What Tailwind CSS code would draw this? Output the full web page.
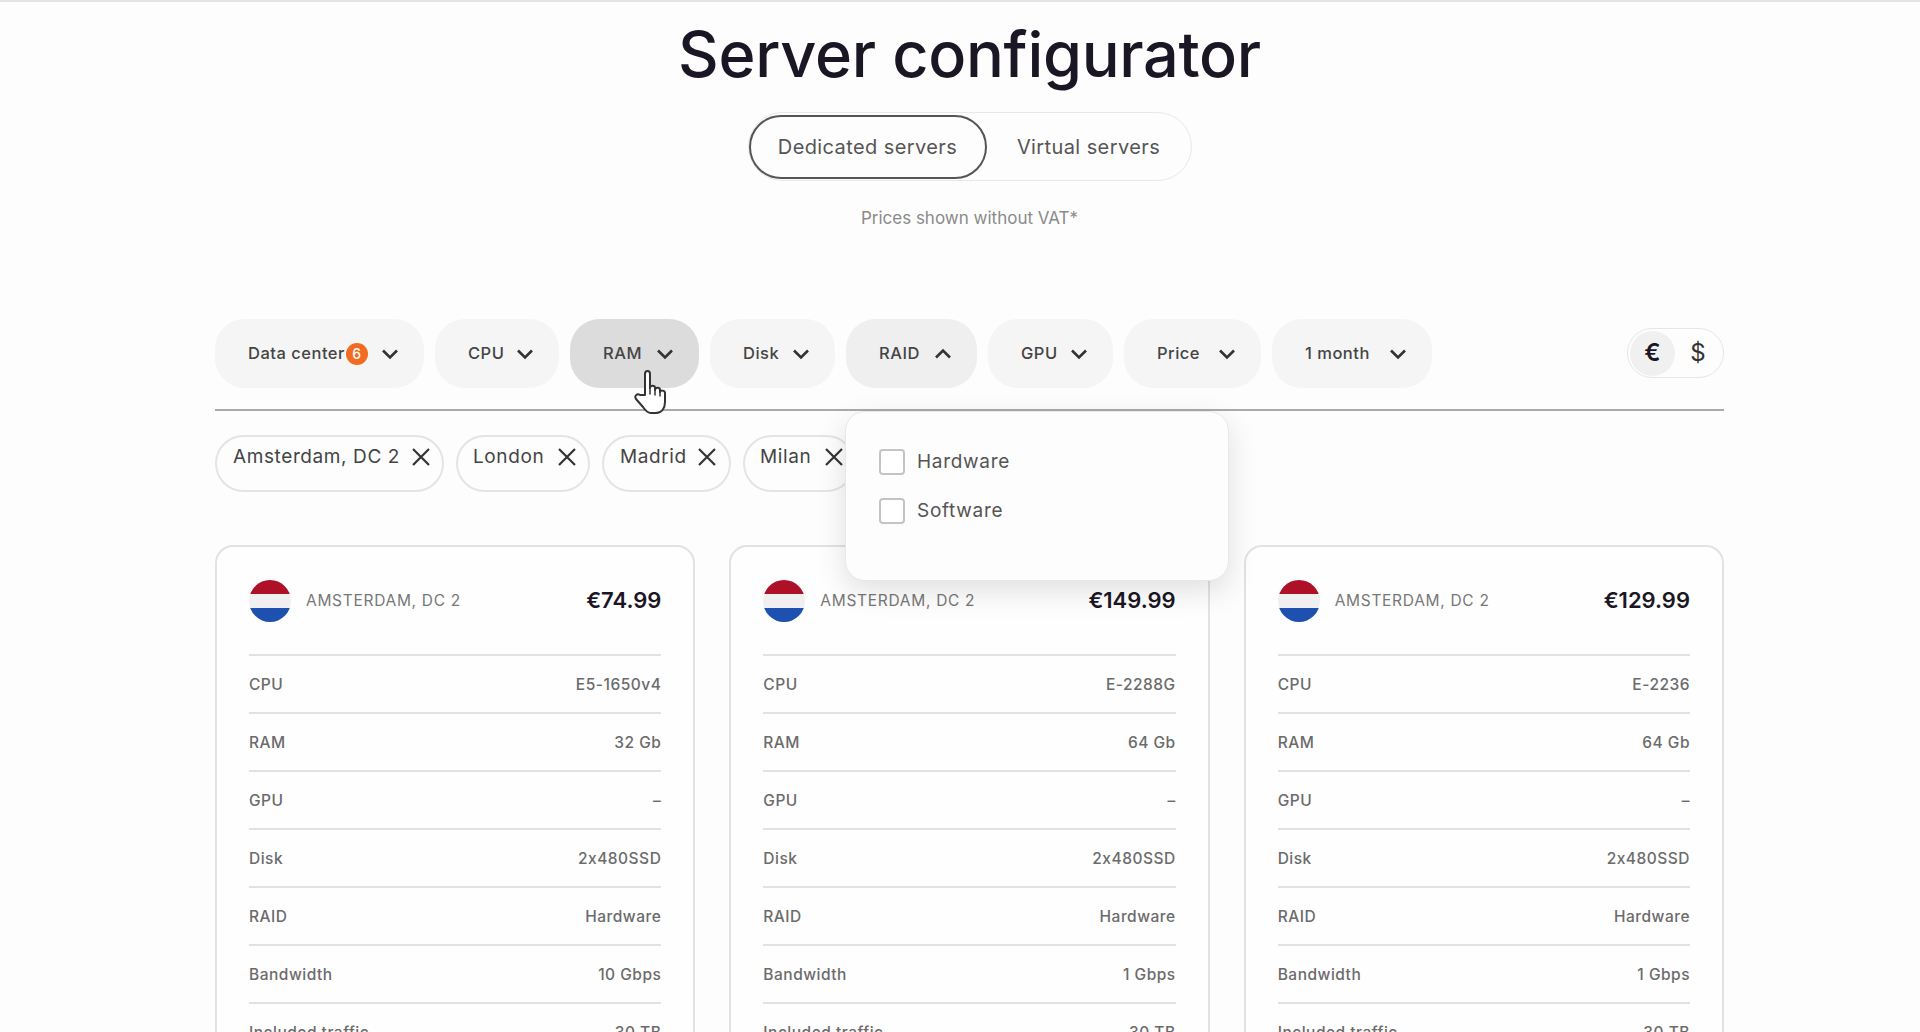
<!DOCTYPE html>
<html>
<head>
  <meta charset="UTF-8">
  <title>Server configurator</title>
  <script src="https://cdn.jsdelivr.net/npm/@tailwindcss/browser@4"></script>
</head>
<body class="h-screen overflow-hidden bg-[#fdfdfd] border-t-2 border-[#e4e4e4] font-['Inter','Noto_Sans',sans-serif] [font-feature-settings:'calt'_0] text-[#1b1623]">

<div class="relative ml-[215px] w-[1509px]">

  <!-- Header -->
  <h1 class="h-[110px] pb-[5px] flex items-center justify-center text-[63px] font-medium tracking-[-0.3px] leading-none">Server configurator</h1>

  <div class="flex justify-center">
    <div class="flex w-[444px] h-[69px] items-center rounded-full border border-[#e8e8e8]">
      <button class="w-[238px] h-[64px] rounded-full border-2 border-[#555] text-[20px] text-[#555] tracking-[0.4px]">Dedicated servers</button>
      <button class="flex-1 text-[20px] text-[#555] tracking-[0.4px]">Virtual servers</button>
    </div>
  </div>

  <p class="mt-[26px] h-[22px] text-center text-[17px] leading-[22px] text-[#8a8a8a]">Prices shown without VAT*</p>

  <!-- Filters -->
  <div class="mt-[90px] h-[92px] flex items-start border-b-2 border-[#aaaaaa]">
    <div class="flex gap-[11px]">
      <button class="flex items-center w-[209px] h-[69px] pl-[33px] rounded-[30px] bg-[#f5f5f5] text-[16.5px] tracking-[0.5px] font-medium text-[#444]">
        <span>Data center</span>
        <span class="ml-[1px] flex items-center justify-center w-[22px] h-[22px] rounded-full bg-[#f26b21] text-[14px] text-white">6</span>
        <svg class="ml-[13px]" width="18" height="18" viewBox="0 0 18 18" fill="none" stroke="#333" stroke-width="2.6"><path d="M2 5.5l7 7 7-7"/></svg>
      </button>
      <button class="flex items-center justify-between w-[124px] h-[69px] pl-[33px] pr-[25px] rounded-[30px] bg-[#f5f5f5] text-[16.5px] tracking-[0.5px] font-medium text-[#444]">
        <span>CPU</span>
        <svg width="18" height="18" viewBox="0 0 18 18" fill="none" stroke="#333" stroke-width="2.6"><path d="M2 5.5l7 7 7-7"/></svg>
      </button>
      <button class="flex items-center justify-between w-[129px] h-[69px] pl-[33px] pr-[25px] rounded-[30px] bg-[#dcdcdc] text-[16.5px] tracking-[0.5px] font-medium text-[#444]">
        <span>RAM</span>
        <svg width="18" height="18" viewBox="0 0 18 18" fill="none" stroke="#333" stroke-width="2.6"><path d="M2 5.5l7 7 7-7"/></svg>
      </button>
      <button class="flex items-center justify-between w-[125px] h-[69px] pl-[33px] pr-[25px] rounded-[30px] bg-[#f5f5f5] text-[16.5px] tracking-[0.5px] font-medium text-[#444]">
        <span>Disk</span>
        <svg width="18" height="18" viewBox="0 0 18 18" fill="none" stroke="#333" stroke-width="2.6"><path d="M2 5.5l7 7 7-7"/></svg>
      </button>
      <button class="flex items-center justify-between w-[131px] h-[69px] pl-[33px] pr-[25px] rounded-[30px] bg-[#efefef] text-[16.5px] tracking-[0.5px] font-medium text-[#444]">
        <span>RAID</span>
        <svg width="18" height="18" viewBox="0 0 18 18" fill="none" stroke="#333" stroke-width="2.6"><path d="M2 12.5l7-7 7 7"/></svg>
      </button>
      <button class="flex items-center justify-between w-[125px] h-[69px] pl-[33px] pr-[25px] rounded-[30px] bg-[#f5f5f5] text-[16.5px] tracking-[0.5px] font-medium text-[#444]">
        <span>GPU</span>
        <svg width="18" height="18" viewBox="0 0 18 18" fill="none" stroke="#333" stroke-width="2.6"><path d="M2 5.5l7 7 7-7"/></svg>
      </button>
      <button class="flex items-center justify-between w-[137px] h-[69px] pl-[33px] pr-[25px] rounded-[30px] bg-[#f5f5f5] text-[16.5px] tracking-[0.5px] font-medium text-[#444]">
        <span>Price</span>
        <svg width="18" height="18" viewBox="0 0 18 18" fill="none" stroke="#333" stroke-width="2.6"><path d="M2 5.5l7 7 7-7"/></svg>
      </button>
      <button class="flex items-center justify-between w-[160px] h-[69px] pl-[33px] pr-[25px] rounded-[30px] bg-[#f5f5f5] text-[16.5px] tracking-[0.5px] font-medium text-[#444]">
        <span>1 month</span>
        <svg width="18" height="18" viewBox="0 0 18 18" fill="none" stroke="#333" stroke-width="2.6"><path d="M2 5.5l7 7 7-7"/></svg>
      </button>
    </div>
    <div class="ml-auto mt-[9px] flex items-center w-[97px] h-[50px] rounded-full border border-[#e6e6e6] px-[2px]">
      <span class="flex items-center justify-center w-[45px] h-[45px] rounded-full bg-[#f0f0f0] text-[24px] font-semibold">€</span>
      <span class="flex-1 text-center text-[24px] text-[#333]">$</span>
    </div>
  </div>

  <!-- Selected filters -->
  <div class="mt-[24px] flex gap-[12px] h-[57px]">
    <div class="flex shrink-0 items-center justify-between w-[229px] h-[57px] pl-[16px] pr-[11px] pb-[13px] rounded-full border-2 border-[#e4e4e4] text-[19px] tracking-[0.6px] text-[#444]">
      <span>Amsterdam, DC 2</span>
      <svg width="20" height="20" viewBox="0 0 20 20" fill="none" stroke="#333" stroke-width="2.2"><path d="M2 2l16 16M18 2L2 18"/></svg>
    </div>
    <div class="flex shrink-0 items-center justify-between w-[134px] h-[57px] pl-[15px] pr-[11px] pb-[13px] rounded-full border-2 border-[#e4e4e4] text-[19px] tracking-[0.6px] text-[#444]">
      <span>London</span>
      <svg width="20" height="20" viewBox="0 0 20 20" fill="none" stroke="#333" stroke-width="2.2"><path d="M2 2l16 16M18 2L2 18"/></svg>
    </div>
    <div class="flex shrink-0 items-center justify-between w-[129px] h-[57px] pl-[16px] pr-[12px] pb-[13px] rounded-full border-2 border-[#e4e4e4] text-[19px] tracking-[0.6px] text-[#444]">
      <span>Madrid</span>
      <svg width="20" height="20" viewBox="0 0 20 20" fill="none" stroke="#333" stroke-width="2.2"><path d="M2 2l16 16M18 2L2 18"/></svg>
    </div>
    <div class="flex shrink-0 items-center justify-between w-[112px] h-[57px] pl-[15px] pr-[9px] pb-[13px] rounded-full border-2 border-[#e4e4e4] text-[19px] tracking-[0.6px] text-[#444]">
      <span>Milan</span>
      <svg width="20" height="20" viewBox="0 0 20 20" fill="none" stroke="#333" stroke-width="2.2"><path d="M2 2l16 16M18 2L2 18"/></svg>
    </div>
  </div>

  <!-- Cards -->
  <div id="cards" class="mt-[53px] grid grid-cols-3 gap-[34px]"></div>

  <!-- RAID dropdown -->
  <div class="absolute left-[630px] top-[409px] w-[384px] h-[170px] pt-[36px] pl-[33px] rounded-[20px] border border-[#e8e8e8] bg-[#fdfdfd] shadow-[0_10px_30px_rgba(0,0,0,0.12)]">
    <label class="flex items-center gap-[12px] h-[28px] text-[19px] tracking-[0.7px] text-[#555]">
      <span class="w-[26px] h-[26px] rounded-[4px] border-2 border-[#c4c4c4] bg-white"></span>Hardware
    </label>
    <label class="mt-[21px] flex items-center gap-[12px] h-[28px] text-[19px] tracking-[0.7px] text-[#555]">
      <span class="w-[26px] h-[26px] rounded-[4px] border-2 border-[#c4c4c4] bg-white"></span>Software
    </label>
  </div>

  <!-- Mouse pointer -->
  <svg class="absolute left-[419px] top-[367px]" width="36" height="46" viewBox="0 0 36 46" fill="#fff" stroke="#333" stroke-width="2" stroke-linejoin="round" stroke-linecap="round">
    <path d="M11 26V5c0-4 5-4 5 0v14c0-3 5-3 5 0v2c0-3 5-3 5 0v2c0-2 5-2 5 1v9c0 6-3 11-9 11h-5c-4 0-6-3-8-6l-7-8c-2-3 1-6 4-4z"/>
    <path d="M16 19v6M21 21v5M26 23v4" fill="none" stroke-width="1.5"/>
  </svg>
</div>

<script>
  const servers = [
    { price: "€74.99", cpu: "E5-1650v4", ram: "32 Gb", bw: "10 Gbps" },
    { price: "€149.99", cpu: "E-2288G", ram: "64 Gb", bw: "1 Gbps" },
    { price: "€129.99", cpu: "E-2236", ram: "64 Gb", bw: "1 Gbps" }
  ];

  function row(label, value) {
    return `<div class="flex items-center justify-between h-[58px] pt-[2px] border-t-2 border-[#e2e2e2] text-[15.5px] tracking-[0.5px] font-medium text-[#6b6b6b]"><span>${label}</span><span>${value}</span></div>`;
  }

  document.getElementById("cards").innerHTML = servers.map(s => `
    <div class="h-[600px] px-[32px] rounded-[18px] border-2 border-[#e2e2e2] bg-[#fefefe]">
      <div class="flex items-center h-[107px]">
        <svg width="42" height="42" viewBox="0 0 42 42"><clipPath id="c"><circle cx="21" cy="21" r="21"/></clipPath><g clip-path="url(#c)"><rect width="42" height="14" fill="#ae1028"/><rect y="14" width="42" height="14" fill="#f0f0f0"/><rect y="28" width="42" height="14" fill="#1e50b0"/></g></svg>
        <span class="ml-[15px] text-[15.5px] tracking-[0.7px] text-[#777]">AMSTERDAM, DC 2</span>
        <span class="ml-auto text-[22px] font-semibold">${s.price}</span>
      </div>
      ${row("CPU", s.cpu)}
      ${row("RAM", s.ram)}
      ${row("GPU", "–")}
      ${row("Disk", "2x480SSD")}
      ${row("RAID", "Hardware")}
      ${row("Bandwidth", s.bw)}
      ${row("Included traffic", "30 TB")}
    </div>`).join("");
</script>
</body>
</html>
